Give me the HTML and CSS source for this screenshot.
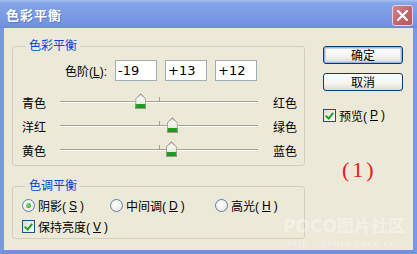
FILE: index.html
```html
<!DOCTYPE html>
<html>
<head>
    <meta charset="utf-8">
    <link rel="stylesheet" href="styles.css">
</head>
<body>
    <div class="window">
        <div class="title-bar">
            <span class="title">色彩平衡</span>
            <button class="close-btn">
                <svg width="11" height="11" viewBox="0 0 11 11"><path d="M1 1L10 10M10 1L1 10" stroke="#fff" stroke-width="2.2" stroke-linecap="round"/></svg>
            </button>
        </div>

        <div class="client">
            <div class="main">
                <!-- Color balance group -->
                <fieldset class="group balance">
                    <legend>色彩平衡</legend>
                    <div class="levels">
                        <label class="levels-label">色阶(<u>L</u>):</label>
                        <input class="level" value="-19">
                        <input class="level" value="+13">
                        <input class="level" value="+12">
                    </div>
                    <div class="slider-row">
                        <span>青色</span>
                        <div class="track"><span class="tick"></span><span class="thumb" style="left: 40.5%"></span></div>
                        <span class="right">红色</span>
                    </div>
                    <div class="slider-row">
                        <span>洋红</span>
                        <div class="track"><span class="tick"></span><span class="thumb" style="left: 56.5%"></span></div>
                        <span class="right">绿色</span>
                    </div>
                    <div class="slider-row">
                        <span>黄色</span>
                        <div class="track"><span class="tick"></span><span class="thumb" style="left: 56%"></span></div>
                        <span class="right">蓝色</span>
                    </div>
                </fieldset>

                <!-- Tone balance group -->
                <fieldset class="group tone">
                    <legend>色调平衡</legend>
                    <div class="radios">
                        <label class="option"><span class="radio checked"></span>阴影(<u>S</u>)</label>
                        <label class="option"><span class="radio"></span>中间调(<u>D</u>)</label>
                        <label class="option"><span class="radio"></span>高光(<u>H</u>)</label>
                    </div>
                    <label class="option"><span class="check checked"></span>保持亮度(<u>V</u>)</label>
                </fieldset>
            </div>

            <div class="side">
                <button class="btn default">确定</button>
                <button class="btn">取消</button>
                <label class="option preview"><span class="check checked"></span>预览(<u>P</u>)</label>
                <div class="step">(1)</div>
            </div>
        </div>

        <div class="watermark">
            <div class="wm-logo">POCO图片社区</div>
            <div class="wm-url">http://photo.poco.cn/</div>
        </div>
    </div>
</body>
</html>
```

FILE: styles.css
```css
html, body {
    margin: 0;
    padding: 0;
}

body {
    width: 417px;
    height: 254px;
    overflow: hidden;
    font-family: "Liberation Sans", "Noto Sans CJK SC", sans-serif;
    font-size: 12px;
    color: #000;
}

.window {
    position: relative;
    width: 417px;
    height: 254px;
    box-sizing: border-box;
    background: #ece9d8;
    border-left: 4px solid #7898e0;
    border-right: 4px solid #7898e0;
    border-bottom: 4px solid #7090dc;
    display: flex;
    flex-direction: column;
}

.title-bar {
    height: 28px;
    margin: 0 -4px;
    padding: 0 4px 0 6px;
    display: flex;
    align-items: center;
    justify-content: space-between;
    background: linear-gradient(#a9c2f3 0, #86a5e8 3px, #7b9ce4 50%, #7294e0 90%, #6889d8 100%);
}

.title {
    color: #fff;
    font-family: "Noto Sans CJK SC", sans-serif;
    font-weight: bold;
    font-size: 13px;
    letter-spacing: 1px;
    text-shadow: 1px 1px 0 #5a78c0;
}

.close-btn {
    width: 21px;
    height: 21px;
    padding: 0;
    margin-top: 2px;
    border: 1px solid #e6d2dc;
    border-radius: 3px;
    background: linear-gradient(135deg, #d48690, #c0626c 60%, #b45862);
    display: flex;
    align-items: center;
    justify-content: center;
}

.client {
    flex: 1;
    display: flex;
    padding: 11px 0 0 8px;
}

.main {
    width: 293px;
}

/* Group boxes */
.group {
    margin: 0;
    border: 1px solid #d0d0bf;
    border-radius: 3px;
    padding: 7px 0 3px 9px;
}

.group legend {
    color: #0046d5;
    line-height: 14px;
    padding: 0 3px;
    margin-left: 4px;
}

.levels {
    display: flex;
    align-items: center;
    gap: 8px;
    height: 21px;
    margin-bottom: 9px;
}

.levels-label {
    width: 85px;
    text-align: right;
}

.level {
    width: 42px;
    height: 21px;
    box-sizing: border-box;
    border: 1px solid #a5acb5;
    padding: 0 2px;
    font-family: "DejaVu Sans", sans-serif;
    font-size: 13px;
    background: #fff;
}

.slider-row {
    display: grid;
    grid-template-columns: 38px 198px 1fr;
    align-items: center;
    height: 24px;
}

.slider-row .right {
    padding-left: 15px;
}

.track {
    position: relative;
    height: 0;
    border-top: 1px solid #a3a397;
    border-bottom: 1px solid #fff;
}

.tick {
    position: absolute;
    left: 99px;
    top: -5px;
    width: 1px;
    height: 4px;
    background: #a3a397;
}

.thumb {
    position: absolute;
    top: -9px;
    width: 11px;
    height: 16px;
    margin-left: -5px;
    background: linear-gradient(#fff, #eaeae4 70%, #1ea41e 70%, #1b8f1b);
    clip-path: polygon(50% 0, 100% 35%, 100% 100%, 0 100%, 0 35%);
}

.thumb::before {
    content: "";
    position: absolute;
    inset: 0;
    background: #9c9c90;
    clip-path: polygon(50% 0, 100% 35%, 100% 100%, 0 100%, 0 35%, 1px 35%, 1px calc(100% - 1px), calc(100% - 1px) calc(100% - 1px), calc(100% - 1px) 36%, 50% 2px, 1px 36%, 0 35%);
}

.tone {
    margin-top: 13px;
    padding: 2px 0 1px 9px;
}

.radios {
    display: grid;
    grid-template-columns: 88px 105px auto;
}

.option {
    display: flex;
    align-items: center;
    gap: 3px;
    height: 21px;
}

.radio {
    width: 11px;
    height: 11px;
    border: 1px solid #5e7ea8;
    border-radius: 50%;
    background: radial-gradient(circle at 40% 40%, #fff, #e4e3dd);
    display: flex;
    align-items: center;
    justify-content: center;
}

.radio.checked::after {
    content: "";
    width: 5px;
    height: 5px;
    border-radius: 50%;
    background: radial-gradient(circle at 35% 35%, #7fdc7f, #21a121);
}

.check {
    width: 11px;
    height: 11px;
    border: 1px solid #1c5180;
    background: linear-gradient(135deg, #dcdcd6, #fff);
    position: relative;
}

.check.checked::after {
    content: "";
    position: absolute;
    left: 3px;
    top: 1px;
    width: 3px;
    height: 6px;
    border: solid #21a121;
    border-width: 0 2px 2px 0;
    transform: rotate(40deg);
}

/* Right column */
.side {
    margin-left: 18px;
    padding-top: 7px;
    display: flex;
    flex-direction: column;
    align-items: flex-start;
}

.btn {
    width: 80px;
    height: 18px;
    padding: 0;
    margin-bottom: 9px;
    border: 1px solid #003c74;
    border-radius: 3px;
    background: linear-gradient(#fff, #f3f3ef 60%, #dcdcd2);
    font-family: "Noto Sans CJK SC", sans-serif;
    font-size: 12px;
    line-height: 14px;
    color: #000;
}

.btn.default {
    box-shadow: inset 0 0 0 1px #98b4e8, inset 0 0 0 2px #c6d6f4;
}

.preview {
    margin-top: 8px;
    height: 14px;
}

.step {
    margin: 36px 0 0 19px;
    font-family: "Liberation Serif", serif;
    font-size: 22px;
    line-height: 24px;
    letter-spacing: 3px;
    color: #e8141a;
}

/* Watermark over the bottom right corner */
.watermark {
    position: absolute;
    right: 8px;
    bottom: 2px;
    text-align: center;
    color: rgba(255, 255, 255, 0.4);
}

.wm-logo {
    font-family: "DejaVu Sans", "Noto Sans CJK SC", sans-serif;
    font-weight: bold;
    font-size: 17px;
    line-height: 20px;
}

.wm-url {
    font-family: "Liberation Serif", serif;
    font-size: 11px;
    line-height: 12px;
    letter-spacing: 1px;
}
```
